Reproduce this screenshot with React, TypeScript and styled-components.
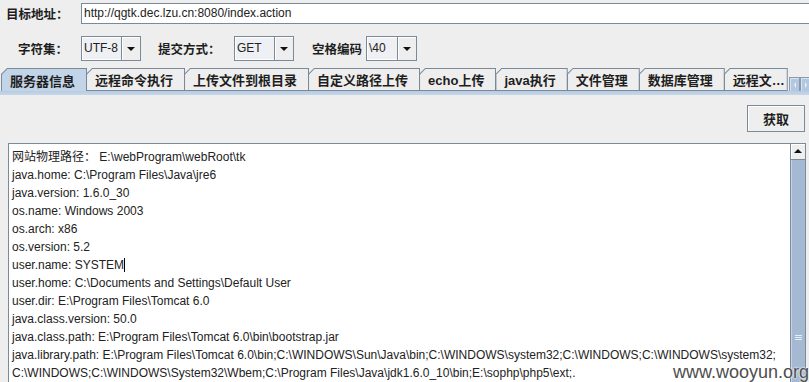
import React from "react";
import styled, { createGlobalStyle } from "styled-components";

const FONT = `"Liberation Sans", "Noto Sans CJK SC", sans-serif`;

const Global = createGlobalStyle`
  html, body { margin: 0; padding: 0; background: #eeeeee; }
  body { font-family: ${FONT}; }
`;

const Frame = styled.div`
  position: relative;
  width: 809px;
  height: 382px;
  overflow: hidden;
  background: #eeeeee;
  display: flex;
  flex-direction: column;
  font-family: ${FONT};
`;

const Row = styled.div<{ $top: number; $h: number; $pl: number }>`
  display: flex;
  align-items: center;
  height: ${(p) => p.$h}px;
  margin-top: ${(p) => p.$top}px;
  padding-left: ${(p) => p.$pl}px;
  flex-shrink: 0;
`;

const Label = styled.span<{ $w: number; $ml?: number }>`
  width: ${(p) => p.$w}px;
  margin-left: ${(p) => p.$ml ?? 0}px;
  flex-shrink: 0;
  font-size: 12.5px;
  font-weight: bold;
  color: #1e1e1e;
  white-space: nowrap;
`;

const UrlField = styled.div`
  flex: 1;
  height: 21px;
  box-sizing: border-box;
  margin-right: -4px;
  border: 1px solid #7a8a99;
  background: #ffffff;
  font-size: 12px;
  line-height: 19px;
  padding-left: 2px;
  color: #222;
  white-space: nowrap;
`;

const Combo = styled.div<{ $w: number }>`
  display: flex;
  flex-shrink: 0;
  width: ${(p) => p.$w}px;
  height: 25px;
  box-sizing: border-box;
  border: 1px solid #7a8a99;
  background: #eeeeee;
`;

const ComboValue = styled.div`
  flex: 1;
  box-sizing: border-box;
  border: 1px solid #ffffff;
  border-right: none;
  background: #eef0f3;
  font-size: 12px;
  line-height: 21px;
  padding-left: 1px;
  color: #222;
  white-space: nowrap;
  overflow: hidden;
`;

const ComboArrow = styled.div`
  width: 19px;
  flex-shrink: 0;
  box-sizing: border-box;
  border-left: 1px solid #7a8a99;
  box-shadow: inset 1px 1px 0 #ffffff;
  background: #eeeeee;
  display: flex;
  align-items: center;
  justify-content: center;
  &::after {
    content: "";
    width: 0;
    height: 0;
    border-left: 4px solid transparent;
    border-right: 4px solid transparent;
    border-top: 4px solid #111;
    margin-top: 1px;
  }
`;

const TabStrip = styled.div`
  position: relative;
  display: flex;
  align-items: flex-end;
  height: 23px;
  margin-top: 7px;
  padding-left: 1px;
  flex-shrink: 0;
  overflow: hidden;
`;

const TabOuter = styled.div<{ $sel?: boolean; $w?: number }>`
  flex-shrink: 0;
  height: 23px;
  ${(p) => (p.$w ? `width:${p.$w}px;` : "")}
  box-sizing: border-box;
  padding: 1px 1px ${(p) => (p.$sel ? 0 : 1)}px 1px;
  background: #7a8a99;
  clip-path: polygon(0 6px, 6px 0, 100% 0, 100% 100%, 0 100%);
  margin-right: -1px;
`;

const TabFace = styled.div<{ $sel?: boolean }>`
  height: 100%;
  box-sizing: border-box;
  background: ${(p) => (p.$sel ? "#c2d4e7" : "#eeeeee")};
  clip-path: polygon(0 5.4px, 5.4px 0, 100% 0, 100% 100%, 0 100%);
  padding: 0 11px 0 8px;
  display: flex;
  align-items: center;
  font-size: 13px;
  font-weight: bold;
  color: #1e1e1e;
  white-space: nowrap;
  overflow: hidden;
`;

const TabScroll = styled.div`
  position: absolute;
  right: -2px;
  top: 9px;
  display: flex;
  height: 15px;
`;

const TabScrollBtn = styled.div<{ $dir: "l" | "r" }>`
  width: 11px;
  height: 15px;
  box-sizing: border-box;
  border: 1px solid #8a9aab;
  background: #b1c8e0;
  box-shadow: inset 1px 1px 0 #d6e3f0;
  display: flex;
  align-items: center;
  justify-content: center;
  &::after {
    content: "";
    width: 0;
    height: 0;
    border-top: 3px solid transparent;
    border-bottom: 3px solid transparent;
    ${(p) =>
      p.$dir === "l"
        ? "border-right: 2px solid #e8eef5;"
        : "border-left: 2px solid #e8eef5;"}
  }
`;

const Band = styled.div`
  height: 4px;
  flex-shrink: 0;
  background: linear-gradient(#b7cbe0, #c6d7e9);
`;

const ActionRow = styled.div`
  display: flex;
  justify-content: flex-end;
  padding-right: 4px;
  margin-top: 10px;
  flex-shrink: 0;
`;

const Button = styled.div`
  width: 58px;
  height: 27px;
  box-sizing: border-box;
  border: 1px solid #7a8a99;
  box-shadow: inset 1px 1px 0 #ffffff;
  background: #eeeeee;
  display: flex;
  align-items: center;
  justify-content: center;
  font-size: 13px;
  font-weight: bold;
  color: #1e1e1e;
`;

const ScrollPane = styled.div`
  flex: 1;
  display: flex;
  margin: 11px 3px 0 8px;
  border-top: 1px solid #7a8a99;
  border-left: 1px solid #7a8a99;
  min-height: 0;
`;

const TextContent = styled.div`
  flex: 1;
  background: #ffffff;
  padding: 4px 0 0 3px;
  font-size: 12px;
  line-height: 18px;
  color: #222;
  white-space: pre;
  overflow: hidden;
`;

const Line = styled.div`
  height: 18px;
`;

const Caret = styled.span`
  display: inline-block;
  width: 1px;
  height: 14px;
  background: #000;
  vertical-align: -3px;
`;

const ScrollBar = styled.div`
  width: 16px;
  flex-shrink: 0;
  box-sizing: border-box;
  border-left: 1px solid #7a8a99;
  border-right: 1px solid #7a8a99;
  display: flex;
  flex-direction: column;
  background: #eeeeee;
`;

const UpButton = styled.div`
  height: 16px;
  flex-shrink: 0;
  box-sizing: border-box;
  border-bottom: 1px solid #7a8a99;
  box-shadow: inset 1px 1px 0 #ffffff;
  background: #eeeeee;
  display: flex;
  align-items: center;
  justify-content: center;
  &::after {
    content: "";
    width: 0;
    height: 0;
    border-left: 4px solid transparent;
    border-right: 4px solid transparent;
    border-bottom: 4px solid #111;
    margin-top: -1px;
  }
`;

const Thumb = styled.div`
  height: 356px;
  flex-shrink: 0;
  box-sizing: border-box;
  background: #a5bad2;
  box-shadow: inset 1px 0 0 #c4d5e7;
  display: flex;
  align-items: center;
  justify-content: center;
`;

const Watermark = styled.div`
  position: absolute;
  right: 0;
  bottom: 0;
  font-family: "Liberation Sans", sans-serif;
  font-size: 18px;
  line-height: 20px;
  color: #4d4d4d;
  text-shadow: 0 0 2px #fff, 0 0 2px #fff;
`;

const tabs = [
  "服务器信息",
  "远程命令执行",
  "上传文件到根目录",
  "自定义路径上传",
  "echo上传",
  "java执行",
  "文件管理",
  "数据库管理",
];

const lines: string[] = [
  "网站物理路径： E:\\webProgram\\webRoot\\tk",
  "java.home: C:\\Program Files\\Java\\jre6",
  "java.version: 1.6.0_30",
  "os.name: Windows 2003",
  "os.arch: x86",
  "os.version: 5.2",
  "__USERNAME__",
  "user.home: C:\\Documents and Settings\\Default User",
  "user.dir: E:\\Program Files\\Tomcat 6.0",
  "java.class.version: 50.0",
  "java.class.path: E:\\Program Files\\Tomcat 6.0\\bin\\bootstrap.jar",
  "java.library.path: E:\\Program Files\\Tomcat 6.0\\bin;C:\\WINDOWS\\Sun\\Java\\bin;C:\\WINDOWS\\system32;C:\\WINDOWS;C:\\WINDOWS\\system32;",
  "C:\\WINDOWS;C:\\WINDOWS\\System32\\Wbem;C:\\Program Files\\Java\\jdk1.6.0_10\\bin;E:\\sophp\\php5\\ext;.",
];

export default function App() {
  return (
    <>
      <Global />
      <Frame>
        <Row $top={3} $h={21} $pl={6}>
          <Label $w={75}>目标地址：</Label>
          <UrlField>http://qgtk.dec.lzu.cn:8080/index.action</UrlField>
        </Row>
        <Row $top={12} $h={25} $pl={18}>
          <Label $w={63}>字符集：</Label>
          <Combo $w={60}>
            <ComboValue>UTF-8</ComboValue>
            <ComboArrow />
          </Combo>
          <Label $w={76} $ml={17}>
            提交方式：
          </Label>
          <Combo $w={60}>
            <ComboValue>GET</ComboValue>
            <ComboArrow />
          </Combo>
          <Label $w={54} $ml={18}>
            空格编码
          </Label>
          <Combo $w={51}>
            <ComboValue>\40</ComboValue>
            <ComboArrow />
          </Combo>
        </Row>
        <TabStrip>
          {tabs.map((t, i) => (
            <TabOuter key={t} $sel={i === 0}>
              <TabFace $sel={i === 0}>{t}</TabFace>
            </TabOuter>
          ))}
          <TabOuter $w={64}>
            <TabFace>远程文…</TabFace>
          </TabOuter>
          <TabScroll>
            <TabScrollBtn $dir="l" />
            <TabScrollBtn $dir="r" />
          </TabScroll>
        </TabStrip>
        <Band />
        <ActionRow>
          <Button>获取</Button>
        </ActionRow>
        <ScrollPane>
          <TextContent>
            {lines.map((l, i) =>
              l === "__USERNAME__" ? (
                <Line key={i}>
                  user.name: SYSTEM
                  <Caret />
                </Line>
              ) : (
                <Line key={i}>{l}</Line>
              )
            )}
          </TextContent>
          <ScrollBar>
            <UpButton />
            <Thumb>
              <svg width="7" height="6" viewBox="0 0 7 6">
                <path d="M0 0.5H7M0 2.5H7M0 4.5H7" stroke="#e6eef7" strokeWidth="1" />
              </svg>
            </Thumb>
          </ScrollBar>
        </ScrollPane>
        <Watermark>www.wooyun.org</Watermark>
      </Frame>
    </>
  );
}
